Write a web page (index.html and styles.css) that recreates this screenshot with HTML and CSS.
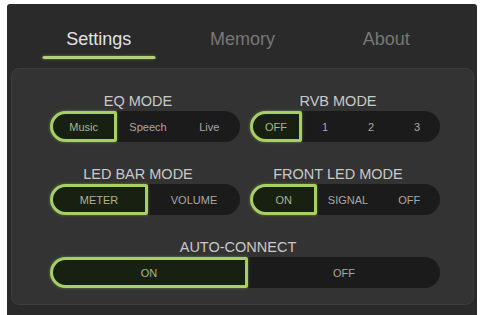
FILE: index.html
```html
<!DOCTYPE html>
<html lang="en">
<head>
  <meta charset="UTF-8">
  <title>Settings</title>
  <link rel="stylesheet" href="styles.css">
</head>
<body>
  <div class="device">
    <nav class="tabs">
      <div class="tab active">Settings</div>
      <div class="tab">Memory</div>
      <div class="tab">About</div>
    </nav>

    <div class="panel">
      <div class="group">
        <div class="group-label">EQ MODE</div>
        <div class="segmented">
          <span class="seg selected">Music</span>
          <span class="seg">Speech</span>
          <span class="seg">Live</span>
        </div>
      </div>
      <div class="group">
        <div class="group-label">RVB MODE</div>
        <div class="segmented">
          <span class="seg selected">OFF</span>
          <span class="seg">1</span>
          <span class="seg">2</span>
          <span class="seg">3</span>
        </div>
      </div>
      <div class="group">
        <div class="group-label">LED BAR MODE</div>
        <div class="segmented">
          <span class="seg selected">METER</span>
          <span class="seg">VOLUME</span>
        </div>
      </div>
      <div class="group">
        <div class="group-label">FRONT LED MODE</div>
        <div class="segmented">
          <span class="seg selected">ON</span>
          <span class="seg">SIGNAL</span>
          <span class="seg">OFF</span>
        </div>
      </div>
      <div class="group wide">
        <div class="group-label">AUTO-CONNECT</div>
        <div class="segmented">
          <span class="seg selected">ON</span>
          <span class="seg">OFF</span>
        </div>
      </div>
    </div>
  </div>
</body>
</html>
```

FILE: styles.css
```css
:root {
  --bg: #2a2a2a;
  --panel: #333;
  --track: #1b1b1b;
  --green: #a6d062;
  --label: #c9c9c9;
  --muted: #777;
}

* {
  margin: 0;
  padding: 0;
  box-sizing: border-box;
}

body {
  background: #fff;
  font-family: 'Liberation Sans', Arial, sans-serif;
  width: 482px;
  height: 315px;
  overflow: hidden;
}

.device {
  margin: 4px 5px 0 7px;
  height: 311px;
  background: var(--bg);
  border-radius: 3px 3px 0 0;
  padding: 0 3px 10px 4px;
}

.tabs {
  display: grid;
  grid-template-columns: repeat(3, 1fr);
  padding: 0 16px;
  height: 64px;
}

.tab {
  text-align: center;
  font-size: 18px;
  color: var(--muted);
  padding-top: 25px;
  position: relative;
}

.tab.active {
  color: #e2e2e2;
}

.tab.active::after {
  content: "";
  position: absolute;
  left: 50%;
  transform: translateX(-50%);
  bottom: 9px;
  width: 113px;
  height: 3px;
  border-radius: 2px;
  background: #b5d07a;
  box-shadow: 0 0 3px rgba(150, 190, 80, 0.6);
}

.panel {
  background: var(--panel);
  border: 1px solid #3c3c3c;
  border-radius: 8px;
  height: 237px;
  display: grid;
  grid-template-columns: 190px 190px;
  column-gap: 10px;
  row-gap: 25px;
  padding: 25px 0 0 38px;
  align-content: start;
}

.group.wide {
  grid-column: 1 / 3;
}

.group-label {
  text-align: center;
  font-size: 14.5px;
  color: var(--label);
  line-height: 14px;
  margin-bottom: 3px;
  padding-right: 14px;
}

.segmented {
  display: flex;
  height: 31px;
  background: var(--track);
  border-radius: 16px;
}

.seg {
  flex: 1;
  display: flex;
  align-items: center;
  justify-content: center;
  font-size: 11px;
  color: #a8a8a8;
}

.seg.selected {
  border: 3px solid var(--green);
  border-radius: 16px 2px 2px 16px;
  background: #182012;
  color: #a9b591;
  box-shadow: 0 0 3px rgba(166, 208, 98, 0.5);
}
```
